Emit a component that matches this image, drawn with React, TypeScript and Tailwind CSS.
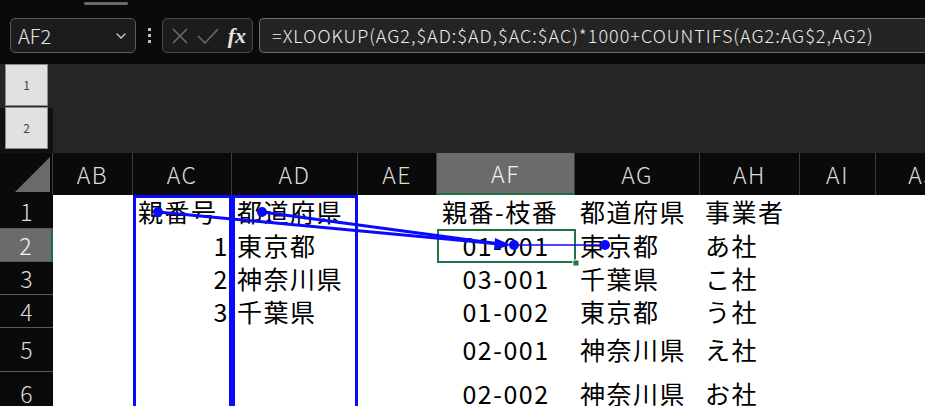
import { ChevronDown } from "lucide-react";

type Cell = { text: string; align?: "left" | "right" | "center" };

const cols = [
  { name: "AB", w: "w-[80px]" },
  { name: "AC", w: "w-[99px]" },
  { name: "AD", w: "w-[126px]" },
  { name: "AE", w: "w-[79px]" },
  { name: "AF", w: "w-[138px]", sel: true },
  { name: "AG", w: "w-[125px]" },
  { name: "AH", w: "w-[100px]" },
  { name: "AI", w: "w-[76px]" },
  { name: "AJ", w: "w-[94px]" },
];

const rows: { n: number; h: string; cells: Record<string, Cell> }[] = [
  {
    n: 1,
    h: "h-[34px]",
    cells: {
      AC: { text: "親番号" },
      AD: { text: "都道府県" },
      AF: { text: "親番-枝番" },
      AG: { text: "都道府県" },
      AH: { text: "事業者" },
    },
  },
  {
    n: 2,
    h: "h-[33px]",
    cells: {
      AC: { text: "1", align: "right" },
      AD: { text: "東京都" },
      AF: { text: "01-001", align: "center" },
      AG: { text: "東京都" },
      AH: { text: "あ社" },
    },
  },
  {
    n: 3,
    h: "h-[33px]",
    cells: {
      AC: { text: "2", align: "right" },
      AD: { text: "神奈川県" },
      AF: { text: "03-001", align: "center" },
      AG: { text: "千葉県" },
      AH: { text: "こ社" },
    },
  },
  {
    n: 4,
    h: "h-[33px]",
    cells: {
      AC: { text: "3", align: "right" },
      AD: { text: "千葉県" },
      AF: { text: "01-002", align: "center" },
      AG: { text: "東京都" },
      AH: { text: "う社" },
    },
  },
  {
    n: 5,
    h: "h-[44px]",
    cells: {
      AF: { text: "02-001", align: "center" },
      AG: { text: "神奈川県" },
      AH: { text: "え社" },
    },
  },
  {
    n: 6,
    h: "h-[44px]",
    cells: {
      AF: { text: "02-002", align: "center" },
      AG: { text: "神奈川県" },
      AH: { text: "お社" },
    },
  },
];

const alignCls = {
  left: "justify-start pl-[5px]",
  right: "justify-end pr-[3px]",
  center: "justify-center",
};

function FormulaBar() {
  return (
    <div className="h-[62px] shrink-0 bg-[#0a0a0a]">
      <div className="h-[18px] pt-[2px]">
        <div className="ml-[84px] h-[3px] w-[44px] rounded-full bg-[#6a6a6a]" />
      </div>
      <div className="flex h-[35px] items-stretch">
        <div className="ml-[10px] flex w-[126px] items-center justify-between rounded-[5px] border border-[#5a5a5a] bg-[#1c1c1c] pl-[7px] pr-[6px] text-[20px] font-light text-[#e6e6e6]">
          <span>AF2</span>
          <ChevronDown className="h-[16px] w-[16px] text-[#cfcfcf]" strokeWidth={2} />
        </div>
        <div className="flex w-[26px] flex-col items-center justify-center gap-[3px]">
          <span className="h-[3px] w-[3px] bg-[#bdbdbd]" />
          <span className="h-[3px] w-[3px] bg-[#bdbdbd]" />
          <span className="h-[3px] w-[3px] bg-[#bdbdbd]" />
        </div>
        <div className="flex w-[91px] items-center justify-between rounded-[5px] border border-[#4a4a4a] bg-[#1c1c1c] pl-[8px] pr-[6px]">
          <svg width="18" height="18" viewBox="0 0 18 18" className="text-[#6a6a6a]">
            <path d="M2 2 L16 16 M16 2 L2 16" stroke="currentColor" strokeWidth="1.6" fill="none" />
          </svg>
          <svg width="22" height="16" viewBox="0 0 22 16" className="text-[#6a6a6a]">
            <path d="M1 8 L8 15 L21 1" stroke="currentColor" strokeWidth="1.6" fill="none" />
          </svg>
          <span className="font-['Liberation_Serif',serif] text-[22px] font-bold italic leading-none text-[#e6e6e6]">
            fx
          </span>
        </div>
        <div className="ml-[6px] flex flex-1 items-center rounded-l-[5px] border-y border-l border-[#6e6e6e] bg-[#242424] pl-[12px] text-[18px] font-light tracking-[1px] whitespace-nowrap text-[#ededed]">
          =XLOOKUP(AG2,$AD:$AD,$AC:$AC)*1000+COUNTIFS(AG2:AG$2,AG2)
        </div>
      </div>
    </div>
  );
}

function OutlineBand() {
  return (
    <div className="flex h-[91px] shrink-0 border-t-2 border-[#0a0a0a] bg-[#262626]">
      <div className="flex w-[53px] flex-col">
        <div className="h-[44px] bg-[#262626]" />
        <div className="flex-1 bg-[#111111]" />
      </div>
      <div className="flex-1" />
    </div>
  );
}

function OutlineButtons() {
  return (
    <div className="absolute left-[5px] top-[64px] flex flex-col gap-[1px]">
      {["1", "2"].map((l) => (
        <div
          key={l}
          className="flex h-[42px] w-[43px] items-center justify-center border border-[#8a8a8a] bg-[#e1e1e1] text-[12px] text-[#444]"
        >
          {l}
        </div>
      ))}
    </div>
  );
}

function ColumnHeader() {
  return (
    <div className="flex h-[42px] shrink-0 bg-[#0a0a0a] text-[23px] font-light tracking-[1.5px] text-[#dcdcdc]">
      <div className="relative w-[53px] shrink-0 border-r border-[#3c3c3c]">
        <svg width="53" height="42" className="absolute inset-0">
          <polygon points="15,39 50,39 50,4" fill="#6b6b6b" />
        </svg>
      </div>
      {cols.map((c) => (
        <div
          key={c.name}
          className={`${c.w} flex shrink-0 items-center justify-center border-r border-[#3c3c3c] ${
            c.sel ? "border-b-2 border-b-[#1f6f43] bg-[#6b6b6b] text-[#f0f0f0]" : ""
          }`}
        >
          {c.name}
        </div>
      ))}
    </div>
  );
}

function Grid() {
  return (
    <div className="flex flex-col bg-white">
      {rows.map((r) => (
        <div key={r.n} className={`flex ${r.h} shrink-0`}>
          <div
            className={`flex w-[53px] shrink-0 items-center justify-center border-b border-[#5a5a5a] text-[23px] font-light ${
              r.n === 2
                ? "border-r-2 border-r-[#1f6f43] bg-[#6b6b6b] text-[#f5f5f5]"
                : "bg-[#0a0a0a] text-[#dcdcdc]"
            }`}
          >
            {r.n}
          </div>
          {cols.map((c) => {
            const cell = r.cells[c.name];
            return (
              <div
                key={c.name}
                className={`${c.w} flex shrink-0 items-center whitespace-nowrap text-[25px] tracking-[1.5px] text-black ${
                  alignCls[cell?.align ?? "left"]
                }`}
              >
                {cell?.text}
              </div>
            );
          })}
        </div>
      ))}
    </div>
  );
}

// precedent trace arrows, range boxes and the active-cell frame
function TraceOverlay() {
  const blue = "#0a0aff";
  return (
    <svg width="925" height="406" className="pointer-events-none absolute left-0 top-0">
      <rect x="134.5" y="196.5" width="96" height="300" fill="none" stroke={blue} strokeWidth="3" />
      <rect x="233.5" y="196.5" width="123" height="300" fill="none" stroke={blue} strokeWidth="3" />

      <rect x="438" y="230" width="137" height="32" fill="none" stroke="#217346" strokeWidth="2" />
      <rect x="573" y="260" width="6" height="6" fill="#217346" stroke="#fff" strokeWidth="1" />

      <line x1="158" y1="212" x2="500" y2="244" stroke={blue} strokeWidth="3" />
      <line x1="262" y1="212" x2="500" y2="244" stroke={blue} strokeWidth="3" />
      <circle cx="158" cy="212" r="5" fill={blue} />
      <circle cx="262" cy="212" r="5" fill={blue} />
      <polygon points="511,245 495,238 494,250" fill={blue} />

      <line x1="514" y1="245" x2="605" y2="245" stroke={blue} strokeWidth="1.5" />
      <circle cx="514" cy="245" r="5" fill={blue} />
      <circle cx="605" cy="245" r="5" fill={blue} />
    </svg>
  );
}

export default function App() {
  return (
    <div className="relative flex h-[406px] w-[925px] flex-col overflow-hidden bg-[#0a0a0a] font-['Noto_Sans_CJK_JP',sans-serif]">
      <FormulaBar />
      <OutlineBand />
      <ColumnHeader />
      <Grid />
      <OutlineButtons />
      <TraceOverlay />
    </div>
  );
}
